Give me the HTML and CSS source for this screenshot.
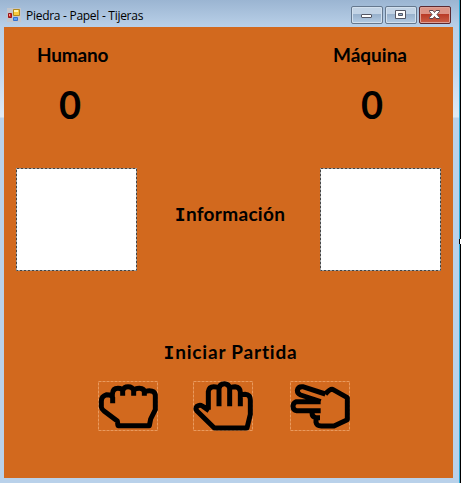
FILE: index.html
```html
<!DOCTYPE html>
<html lang="es">
<head>
<meta charset="utf-8">
<title>Piedra - Papel - Tijeras</title>
<link rel="stylesheet" href="styles.css">
</head>
<body>
<div class="window">
  <header class="titlebar">
    <svg class="app-icon" width="14" height="14" viewBox="0 0 14 14">
      <path fill="#c3c6cc" d="M0 0h14v14H0z"/>
      <path fill="#f8cc3c" stroke="#b18a1d" d="M6.500 1.500h6v6h-6z"/>
      <path fill="#fff3ad" d="M7 2h4v2H7z"/>
      <path fill="#d32c25" stroke="#981318" d="M1.500 5.500h3v4h-3z"/>
      <path fill="#f79c92" d="M2 6h1v2H2z"/>
      <path fill="#5ba0f5" stroke="#3470ce" d="M6.500 9.500h4v3h-4z"/>
    </svg>
    <span class="title">Piedra - Papel - Tijeras</span>
    <div class="controls">
      <span class="control"><svg width="32" height="18" viewBox="0 0 32 18"><rect x="10.500" y="8.500" width="10" height="3" rx=".5" fill="#fff" stroke="#545764"/></svg></span>
      <span class="control"><svg width="32" height="18" viewBox="0 0 32 18"><path d="M10.500 4.500h10v8h-10zM13.500 7.500v2h4v-2z" fill="#fff" fill-rule="evenodd" stroke="#545764"/></svg></span>
      <span class="control close"><svg width="32" height="18" viewBox="0 0 32 18"><path d="M10.500 4.500h3.500l1.500 2 1.500-2h3.500v1l-2.500 3 2.500 3v1H17l-1.500-2-1.500 2h-3.500v-1l2.500-3-2.500-3z" fill="#fff" stroke="#5d4650"/></svg></span>
    </div>
  </header>
  <main class="client">
    <div class="row names"><span class="label human">Humano</span><span class="label machine">Máquina</span></div>
    <div class="row scores"><span class="score">0</span><span class="score">0</span></div>
    <div class="row arena">
      <svg class="choice" width="121" height="103"><rect x=".5" y=".5" width="120" height="102"/></svg>
      <span class="label info"><span class="cap-i">I</span>nformación</span>
      <svg class="choice" width="121" height="103"><rect x=".5" y=".5" width="120" height="102"/></svg>
    </div>
    <div class="row start"><span class="label begin"><span class="cap-i">I</span>niciar Partida</span></div>
    <div class="row hands">
      <svg class="hand" width="60" height="50" viewBox="24 18 180 150">
        <rect class="edge" x="25.500" y="19.500" width="177" height="147"/>
        <path d="M68 85V68Q66 59 50 59Q34 64 34 78V96Q35 103 42 108L82 138L84 152H178L182 132L196 104V60Q194 47 178 47Q167 47 163 52M67 65V58Q68 40 84 40Q96 40 98 46V62M98 46Q102 35 114 35Q128 35 131 46V62M131 46Q136 40 148 40Q163 40 163 52V62"/>
      </svg>
      <svg class="hand" width="60" height="50" viewBox="18 18 180 150">
        <rect class="edge" x="19.500" y="19.500" width="177" height="147"/>
        <path d="M66 107L46 93Q38 88 30 94Q24 100 30 108L82 159H180L190 118V74Q190 59 174 58Q164 58 160 62M64 104V50Q66 35 80 35Q92 35 96 40V94M96 40Q98 26 112 26Q126 26 128 40V94M128 40Q132 35 144 35Q160 37 160 52V94"/>
      </svg>
      <svg class="hand" width="60" height="50" viewBox="18 18 180 150">
        <rect class="edge" x="19.500" y="19.500" width="177" height="147"/>
        <path d="M124 57L56 35Q42 34 40 46Q40 56 50 60L110 80M110 80H36Q27 84 27 94Q27 106 38 107H110M84 109V114Q84 126 96 128H108M96 130V142Q98 153 112 153H150L190 134V68L146 43Q138 41 124 57"/>
      </svg>
    </div>
  </main>
  <i class="cursor"></i>
</div>
</body>
</html>
```

FILE: styles.css
```css
* { box-sizing: border-box; }
body { margin: 0; overflow: hidden; }
.window {
  position: relative;
  width: 461px;
  height: 483px;
  padding: 0 7px 5px 4px;
  border-right: 1px solid #000;
  background:
    linear-gradient(#27a9d6, #27a9d6) right / 1px 100% no-repeat,
    linear-gradient(#9bb5d2 0, #b9d0e8 27px, #c3d7ed 70px, #dfeaf5 117px, #b9d1ea 118px);
}
.titlebar {
  display: flex;
  align-items: flex-start;
  height: 27px;
  padding: 0 2px 0 3px;
}
.app-icon { margin-top: 8px; }
.title {
  margin: 7px 0 0 5px;
  font: 12px/17px "Open Sans", sans-serif;
  letter-spacing: -0.28px;
  color: #000;
  white-space: nowrap;
}
.controls { display: flex; gap: 2px; margin: 6px 0 0 auto; }
.control {
  width: 32px;
  height: 18px;
  border: 1px solid #65788e;
  border-radius: 2px;
  box-shadow: inset 0 0 0 1px #d2e0ee;
  background: linear-gradient(#c2d3e5 0 45%, #98b1cc 46%, #b3cbe3);
}
.control svg { display: block; margin: -1px; }
.control.close {
  border-color: #5c2930;
  box-shadow: inset 0 0 0 1px #dda196;
  background: linear-gradient(#dc9385 0 45%, #b93b27 46%, #cb6045);
}
.client {
  height: 451px;
  background: #d2691e;
  color: #000;
}
.row { display: flex; }
.label {
  font: bold 19px/28px Lato, sans-serif;
  font-variant-ligatures: none;
  white-space: nowrap;
}
.cap-i { font-family: "DejaVu Sans Mono", monospace; font-size: 18px; }
.names { height: 56px; padding: 14px 46px 0 33px; justify-content: space-between; }
.human { letter-spacing: -0.2px; }
.scores { height: 85px; padding: 0 70px 0 55px; justify-content: space-between; }
.score { margin-top: -1px; font: bold 38px/44px Lato, sans-serif; }
.arena {
  height: 103px;
  padding: 0 12px;
  justify-content: space-between;
}
.choice { background: #fff; }
.choice rect { fill: none; stroke: #444; stroke-dasharray: 3 1; }
.info { margin: 32px 0 0 3px; letter-spacing: 0.3px; }
.start { height: 110px; padding: 67px 0 0 4px; justify-content: center; }
.begin { letter-spacing: 0.8px; }
.hands { padding-left: 94px; }
.hand { fill: none; stroke: #000; stroke-width: 15; stroke-linejoin: round; }
.hand + .hand { margin-left: 35px; }
.hand + .hand + .hand { margin-left: 37px; }
.hand .edge { stroke: #e99a5e; stroke-width: 3; stroke-dasharray: 9 3; }
.cursor {
  position: absolute;
  top: 239px;
  right: -1px;
  width: 2px;
  height: 5px;
  background: #fff;
  border: solid #000;
  border-width: 0 0 0 1px;
}
```
